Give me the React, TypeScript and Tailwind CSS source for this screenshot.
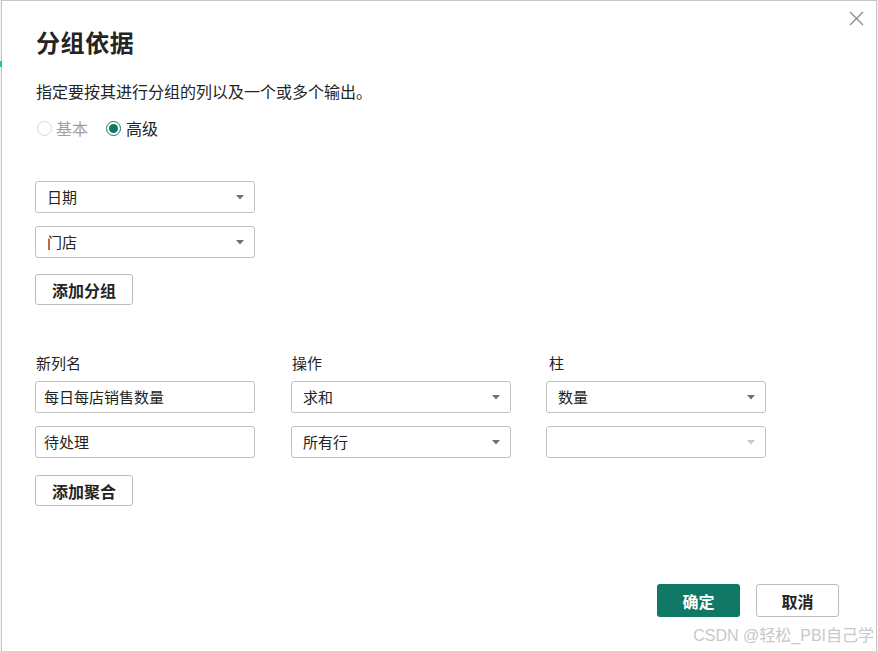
import React from "react";

const font = { fontFamily: '"Noto Sans CJK SC", "Noto Sans", sans-serif' };

function Caret({ light }: { light?: boolean }) {
  return (
    <svg width="8" height="5" viewBox="0 0 8 5" className="shrink-0">
      <path d="M0 0 L8 0 L4 4.5 Z" fill={light ? "#c8c8c8" : "#707070"} />
    </svg>
  );
}

function Select({ value, light }: { value: string; light?: boolean }) {
  return (
    <div className="w-[220px] h-[32px] border border-[#c2c2c2] rounded-[3px] flex items-center justify-between pl-[11px] pr-[10px] text-[15px] text-[#252423] bg-white">
      <span>{value}</span>
      <Caret light={light} />
    </div>
  );
}

function Input({ value }: { value: string }) {
  return (
    <div className="w-[220px] h-[32px] border border-[#c2c2c2] rounded-[3px] flex items-center pl-[8px] text-[15px] text-[#252423] bg-white">
      {value}
    </div>
  );
}

function Btn({ label }: { label: string }) {
  return (
    <div className="w-[98px] h-[31px] border border-[#bdbdbd] rounded-[3px] flex items-center justify-center text-[16px] font-bold text-[#252423] bg-white">
      {label}
    </div>
  );
}

export default function App() {
  return (
    <div className="w-[878px] h-[651px] bg-[#f3f3f3] flex overflow-hidden" style={font}>
      <div className="relative ml-[1px] w-[876px] h-[660px] bg-white border-t border-l border-r border-[#c6c6c6] pl-[33px]">
        <div className="absolute left-[-2px] top-[60px] w-[2px] h-[6px] bg-[#1ec8b0]" />
        <svg className="absolute right-[12px] top-[10px]" width="15" height="15" viewBox="0 0 15 15">
          <path d="M1 1 L14 14 M14 1 L1 14" stroke="#8a8a8a" strokeWidth="1.3" fill="none" />
        </svg>
        <div className="pt-[25px] pl-[1px] text-[24px] leading-[32px] font-bold text-[#252423] tracking-[0.6px]">分组依据</div>
        <div className="mt-[22px] pl-[1px] text-[16px] leading-[22px] text-[#252423]">
          指定要按其进行分组的列以及一个或多个输出。
        </div>
        <div className="mt-[16px] flex items-center h-[20px] text-[16px]">
          <div className="flex items-center">
            <span className="w-[15px] h-[15px] rounded-full border border-[#d8d8d8] bg-white ml-[2px]" />
            <span className="ml-[4px] text-[#a19f9d]">基本</span>
          </div>
          <div className="flex items-center ml-[18px]">
            <span className="w-[15px] h-[15px] rounded-full border border-[#117865] flex items-center justify-center">
              <span className="w-[9px] h-[9px] rounded-full bg-[#117865]" />
            </span>
            <span className="ml-[5px] text-[#252423]">高级</span>
          </div>
        </div>
        <div className="mt-[43px] flex flex-col gap-[13px]">
          <Select value="日期" />
          <Select value="门店" />
        </div>
        <div className="mt-[16px]">
          <Btn label="添加分组" />
        </div>
        <div className="mt-[48px] flex text-[15px] text-[#252423] leading-[20px]">
          <div className="w-[256px] pl-[1px]">新列名</div>
          <div className="w-[255px] pl-[1px]">操作</div>
          <div className="pl-[3px]">柱</div>
        </div>
        <div className="mt-[8px] flex">
          <Input value="每日每店销售数量" />
          <div className="ml-[36px]"><Select value="求和" /></div>
          <div className="ml-[35px]"><Select value="数量" /></div>
        </div>
        <div className="mt-[13px] flex">
          <Input value="待处理" />
          <div className="ml-[36px]"><Select value="所有行" /></div>
          <div className="ml-[35px]"><Select value="" light /></div>
        </div>
        <div className="mt-[17px]">
          <Btn label="添加聚合" />
        </div>
        <div className="mt-[78px] flex justify-end gap-[16px] pr-[37px]">
          <div className="w-[83px] h-[33px] rounded-[3px] bg-[#117865] flex items-center justify-center text-white text-[16px] font-bold">
            确定
          </div>
          <div className="w-[83px] h-[33px] rounded-[3px] border border-[#bdbdbd] bg-white flex items-center justify-center text-[#252423] text-[16px] font-bold">
            取消
          </div>
        </div>
        <div className="absolute right-[2px] top-[624px] text-[16px] text-[#c8c8c8] leading-[22px]" style={{ fontFamily: '"Liberation Sans", "Noto Sans CJK SC", sans-serif' }}>
          CSDN @轻松_PBI自己学
        </div>
      </div>
    </div>
  );
}
